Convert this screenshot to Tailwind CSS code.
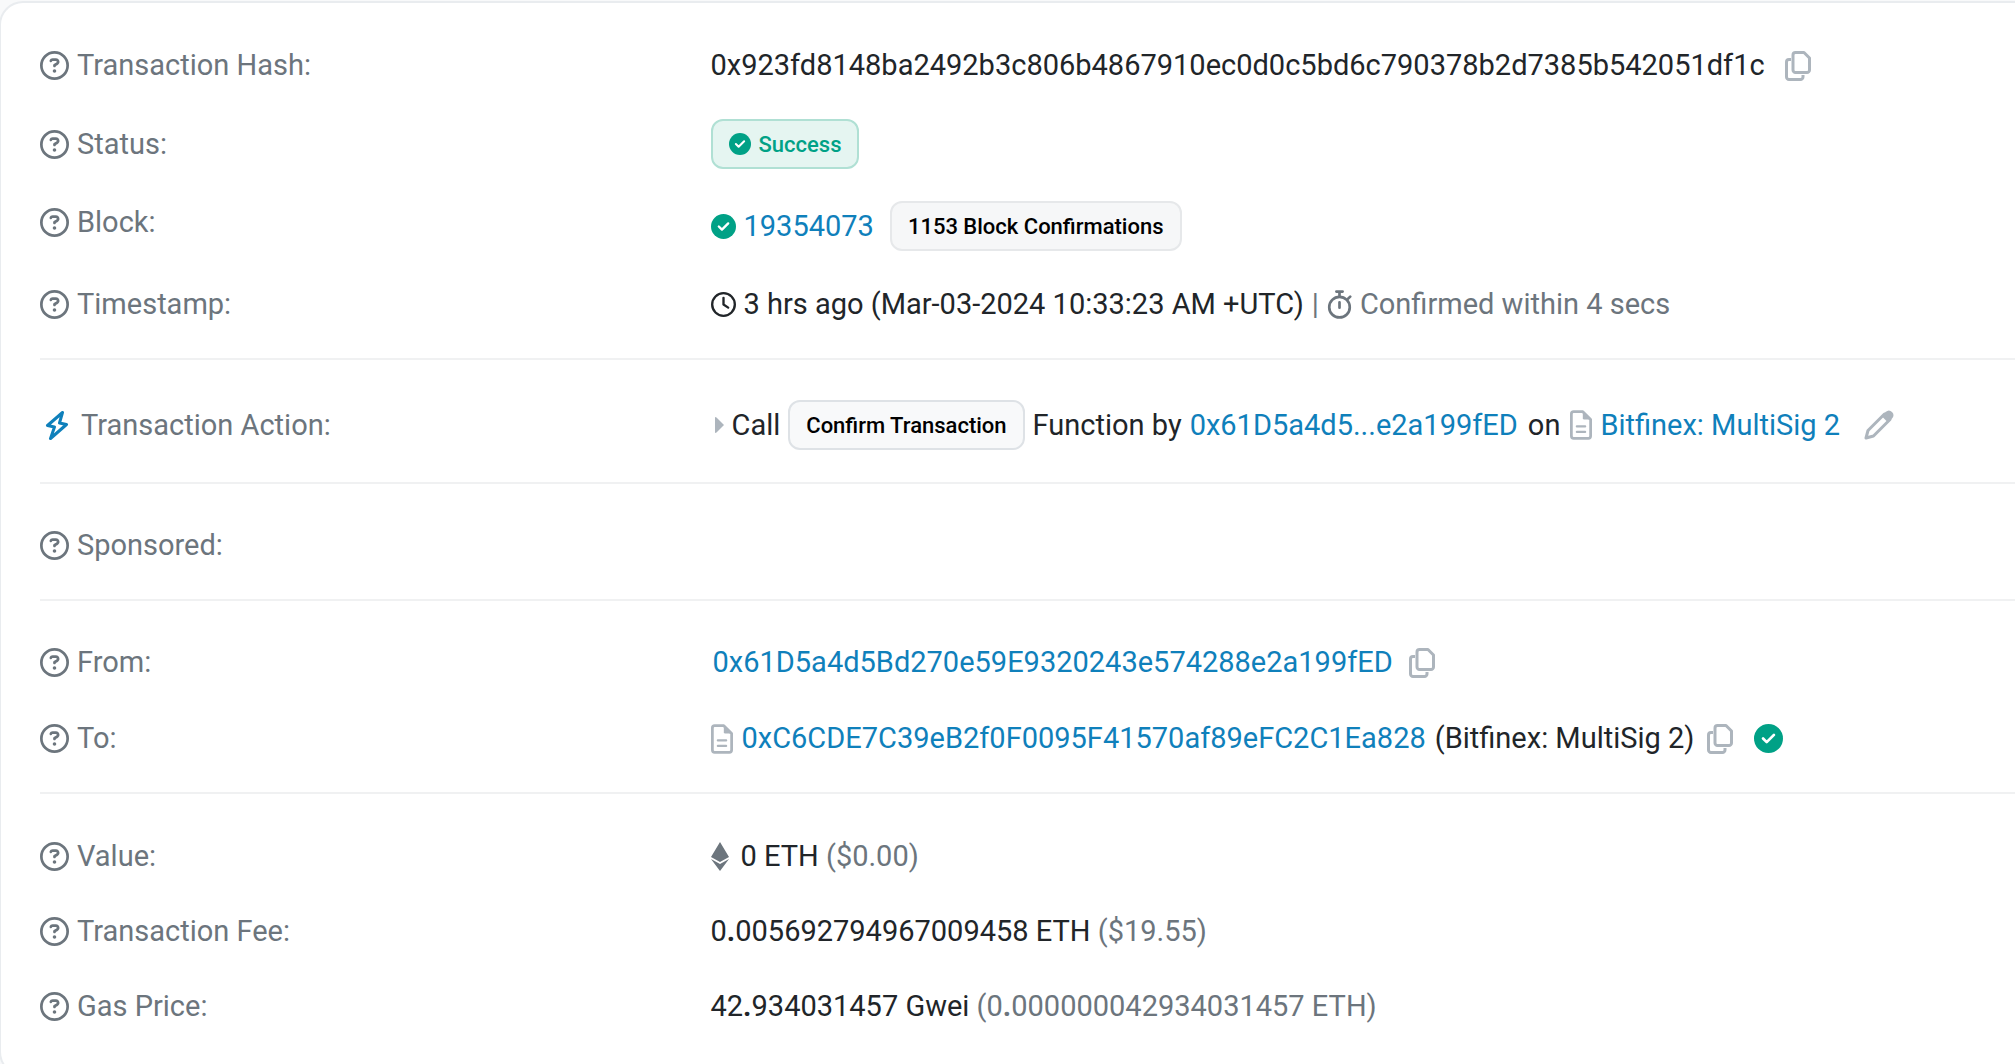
<!DOCTYPE html>
<html lang="en">

<head>
    <meta charset="UTF-8">
    <meta name="viewport" content="width=device-width, initial-scale=1.0">
    <title>Transaction Details</title>
    <script src="https://cdn.jsdelivr.net/npm/@tailwindcss/browser@4"></script>
</head>

<body class="bg-[#f8f9fa] font-[Roboto,sans-serif] text-[29px] leading-[43px] text-[#212529]">
    <!-- icon set -->
    <svg class="hidden">
        <symbol id="help" viewBox="0 0 512 512">
            <path fill="currentColor" d="M464 256A208 208 0 1 0 48 256a208 208 0 1 0 416 0zM0 256a256 256 0 1 1 512 0A256 256 0 1 1 0 256zm169.8-90.7c7.9-22.3 29.1-37.3 52.8-37.3h58.3c34.9 0 63.1 28.3 63.1 63.1c0 22.6-12.1 43.5-31.7 54.8L280 264.4c-.2 13-10.9 23.6-24 23.6c-13.3 0-24-10.7-24-24V250.5c0-8.6 4.6-16.5 12.1-20.8l44.3-25.4c4.7-2.7 7.6-7.7 7.6-13.1c0-8.4-6.8-15.1-15.1-15.1H222.6c-3.4 0-6.4 2.1-7.5 5.3l-.4 1.2c-4.4 12.5-18.2 19-30.6 14.6s-19-18.2-14.6-30.6l.4-1.2zM224 352a32 32 0 1 1 64 0 32 32 0 1 1 -64 0z" />
        </symbol>
        <symbol id="check" viewBox="0 0 512 512">
            <circle cx="256" cy="256" r="256" fill="currentColor" />
            <path d="M160 256l64 64 128-128" fill="none" stroke="#fff" stroke-width="48" stroke-linecap="round" stroke-linejoin="round" />
        </symbol>
        <symbol id="clock" viewBox="0 0 512 512">
            <g fill="none" stroke="currentColor" stroke-width="48" stroke-linecap="round" stroke-linejoin="round">
                <circle cx="256" cy="256" r="232" />
                <path d="M256 120v136l96 64" />
            </g>
        </symbol>
        <symbol id="stopwatch" viewBox="0 0 448 512">
            <g fill="none" stroke="currentColor" stroke-width="48" stroke-linecap="round">
                <circle cx="224" cy="304" r="184" />
                <path d="M168 24h112M224 24v90M224 216v96M370 160l46-46" />
            </g>
        </symbol>
        <symbol id="copy" viewBox="0 0 26 30">
            <g fill="none" stroke="currentColor" stroke-width="3" stroke-linejoin="round">
                <path d="M10.500 1.500h8.500l5.500 5.500v12a2.500 2.500 0 0 1-2.500 2.500h-11.500a2.500 2.500 0 0 1-2.500-2.500v-15a2.500 2.500 0 0 1 2.500-2.500z" />
                <path d="M6 8.500h-2a2.500 2.500 0 0 0-2.500 2.500v15a2.500 2.500 0 0 0 2.500 2.500h11.500a2.500 2.500 0 0 0 2.500-2.500v-2" />
            </g>
        </symbol>
        <symbol id="file" viewBox="0 0 384 512">
            <path d="M64 24h160l136 136v288a40 40 0 0 1-40 40H64a40 40 0 0 1-40-40V64a40 40 0 0 1 40-40z" fill="none" stroke="currentColor" stroke-width="48" stroke-linejoin="round" />
            <path d="M224 16v120a24 24 0 0 0 24 24h120z" fill="currentColor" />
            <path d="M120 280h144M120 376h144" stroke="currentColor" stroke-width="40" stroke-linecap="round" />
        </symbol>
        <symbol id="bolt" viewBox="0 0 22 29">
            <path d="M16.500 1.500L1.500 14.500l7 1.500-4 11.500 16-14-7-1.500z" fill="none" stroke="currentColor" stroke-width="3" stroke-linejoin="round" />
        </symbol>
        <symbol id="pencil" viewBox="0 0 30 30">
            <path d="M4 20.500L20.500 4l5.500 5.500-16.500 16.500-7.500 2z" fill="none" stroke="currentColor" stroke-width="3" stroke-linejoin="round" />
            <path d="M17.500 6l4-4q3.500-3 6.500 0t0 6.500l-4 4z" fill="currentColor" />
        </symbol>
        <symbol id="eth" viewBox="0 0 18 29">
            <path d="M9 0l9 15-9 5-9-5zM0 17l9 5 9-5-9 12z" fill="currentColor" />
        </symbol>
    </svg>

    <main class="mt-px -ml-px overflow-hidden rounded-l-3xl border-y-2 border-l-2 border-[#e9ecef] bg-white pt-[41px] pl-[39px] pb-[46px]">
        <section class="flex flex-col gap-8 border-b-2 border-[#f0f1f2] pb-8">
            <div class="flex items-center">
                <div class="flex w-[calc(34%-1px)] shrink-0 items-center gap-2 text-[#6c757d]"><svg class="size-[29px]"><use href="#help" /></svg>Transaction Hash:</div>
                <div class="flex items-center whitespace-nowrap">
                    0x923fd8148ba2492b3c806b4867910ec0d0c5bd6c790378b2d7385b542051df1c
                    <button class="ml-5 text-[#adb5bd]" aria-label="Copy hash"><svg class="h-[30px] w-[26px]"><use href="#copy" /></svg></button>
                </div>
            </div>
            <div class="flex items-center">
                <div class="flex w-[calc(34%-1px)] shrink-0 items-center gap-2 text-[#6c757d]"><svg class="size-[29px]"><use href="#help" /></svg>Status:</div>
                <span class="flex h-[50px] items-center gap-2 rounded-xl border-2 border-[#b0e0d4] bg-[#e5f5f1] px-4 text-[22px] font-medium text-[#00a186]"><svg class="size-[22px]"><use href="#check" /></svg>Success</span>
            </div>
            <div class="flex items-start">
                <div class="flex w-[calc(34%-1px)] shrink-0 items-center gap-2 text-[#6c757d]"><svg class="size-[29px]"><use href="#help" /></svg>Block:</div>
                <div class="flex items-center whitespace-nowrap">
                    <svg class="mr-2 size-[25px] text-[#00a186]"><use href="#check" /></svg>
                    <a href="#" class="mr-4 text-[#0f80bb]">19354073</a>
                    <span class="flex h-[50px] items-center rounded-xl border-2 border-[#e6e8ea] bg-[#f6f7f8] px-4 text-[22px] font-medium text-black">1153 Block Confirmations</span>
                </div>
            </div>
            <div class="flex items-center">
                <div class="flex w-[calc(34%-1px)] shrink-0 items-center gap-2 text-[#6c757d]"><svg class="size-[29px]"><use href="#help" /></svg>Timestamp:</div>
                <div class="flex items-center gap-2 whitespace-nowrap">
                    <svg class="size-[25px]"><use href="#clock" /></svg>
                    <span>3 hrs ago (Mar-03-2024 10:33:23 AM +UTC)</span>
                    <span class="text-[#6c757d]">|</span>
                    <svg class="h-[29px] w-[25px] text-[#6c757d]"><use href="#stopwatch" /></svg>
                    <span class="text-[#6c757d]">Confirmed within 4 secs</span>
                </div>
            </div>
        </section>

        <section class="border-b-2 border-[#f0f1f2] pt-10 pb-8">
            <div class="flex items-center">
                <div class="flex w-[calc(34%-1px)] shrink-0 items-center gap-3 pl-[5px] text-[#6c757d]"><svg class="h-[29px] w-[24px] text-[#0f80bb]"><use href="#bolt" /></svg>Transaction Action:</div>
                <div class="flex items-center gap-2 whitespace-nowrap pl-1">
                    <svg class="h-4 w-[9px] text-[#adb5bd]" viewBox="0 0 9 16"><path d="M0 1q0-2 2 0l7 7-7 7q-2 2-2 0z" fill="currentColor" /></svg>
                    <span>Call</span>
                    <span class="flex h-[50px] items-center rounded-xl border-2 border-[#dee2e6] bg-[#f8f9fa] px-4 text-[22px] font-medium text-black">Confirm Transaction</span>
                    <span>Function by</span>
                    <a href="#" class="text-[#0f80bb]">0x61D5a4d5...e2a199fED</a>
                    <span class="mx-0.5">on</span>
                    <svg class="h-[30px] w-[22px] text-[#adb5bd]"><use href="#file" /></svg>
                    <a href="#" class="text-[#0f80bb]">Bitfinex: MultiSig 2</a>
                    <button class="ml-4 text-[#adb5bd]" aria-label="Edit"><svg class="size-[30px]"><use href="#pencil" /></svg></button>
                </div>
            </div>
        </section>

        <section class="border-b-2 border-[#f0f1f2] pt-10 pb-8">
            <div class="flex items-center gap-2 text-[#6c757d]"><svg class="size-[29px]"><use href="#help" /></svg>Sponsored:</div>
        </section>

        <section class="flex flex-col gap-[33px] border-b-2 border-[#f0f1f2] pt-10 pb-8">
            <div class="flex items-center">
                <div class="flex w-[calc(34%-1px)] shrink-0 items-center gap-2 text-[#6c757d]"><svg class="size-[29px]"><use href="#help" /></svg>From:</div>
                <div class="flex items-center whitespace-nowrap pl-0.5">
                    <a href="#" class="text-[#0f80bb]">0x61D5a4d5Bd270e59E9320243e574288e2a199fED</a>
                    <button class="ml-4 text-[#adb5bd]" aria-label="Copy sender"><svg class="h-[30px] w-[26px]"><use href="#copy" /></svg></button>
                </div>
            </div>
            <div class="flex items-center">
                <div class="flex w-[calc(34%-1px)] shrink-0 items-center gap-2 text-[#6c757d]"><svg class="size-[29px]"><use href="#help" /></svg>To:</div>
                <div class="flex items-center gap-[9px] whitespace-nowrap">
                    <svg class="h-[30px] w-[22px] text-[#adb5bd]"><use href="#file" /></svg>
                    <a href="#" class="text-[#0f80bb]">0xC6CDE7C39eB2f0F0095F41570af89eFC2C1Ea828</a>
                    <span>(Bitfinex: MultiSig 2)</span>
                    <button class="ml-1 text-[#adb5bd]" aria-label="Copy recipient"><svg class="h-[30px] w-[26px]"><use href="#copy" /></svg></button>
                    <svg class="ml-3 size-[29px] text-[#00a186]"><use href="#check" /></svg>
                </div>
            </div>
        </section>

        <section class="flex flex-col gap-8 pt-[41px]">
            <div class="flex items-center">
                <div class="flex w-[calc(34%-1px)] shrink-0 items-center gap-2 text-[#6c757d]"><svg class="size-[29px]"><use href="#help" /></svg>Value:</div>
                <div class="flex items-center gap-3">
                    <svg class="h-[29px] w-[18px] text-[#6c757d]"><use href="#eth" /></svg>
                    <span>0 ETH <span class="text-[#6c757d]">($0.00)</span></span>
                </div>
            </div>
            <div class="flex items-center">
                <div class="flex w-[calc(34%-1px)] shrink-0 items-center gap-2 text-[#6c757d]"><svg class="size-[29px]"><use href="#help" /></svg>Transaction Fee:</div>
                <div>0<b>.</b>005692794967009458 ETH <span class="text-[#6c757d]">($19.55)</span></div>
            </div>
            <div class="flex items-center">
                <div class="flex w-[calc(34%-1px)] shrink-0 items-center gap-2 text-[#6c757d]"><svg class="size-[29px]"><use href="#help" /></svg>Gas Price:</div>
                <div>42<b>.</b>934031457 Gwei <span class="text-[#6c757d]">(0<b>.</b>000000042934031457 ETH)</span></div>
            </div>
        </section>
    </main>
</body>

</html>
